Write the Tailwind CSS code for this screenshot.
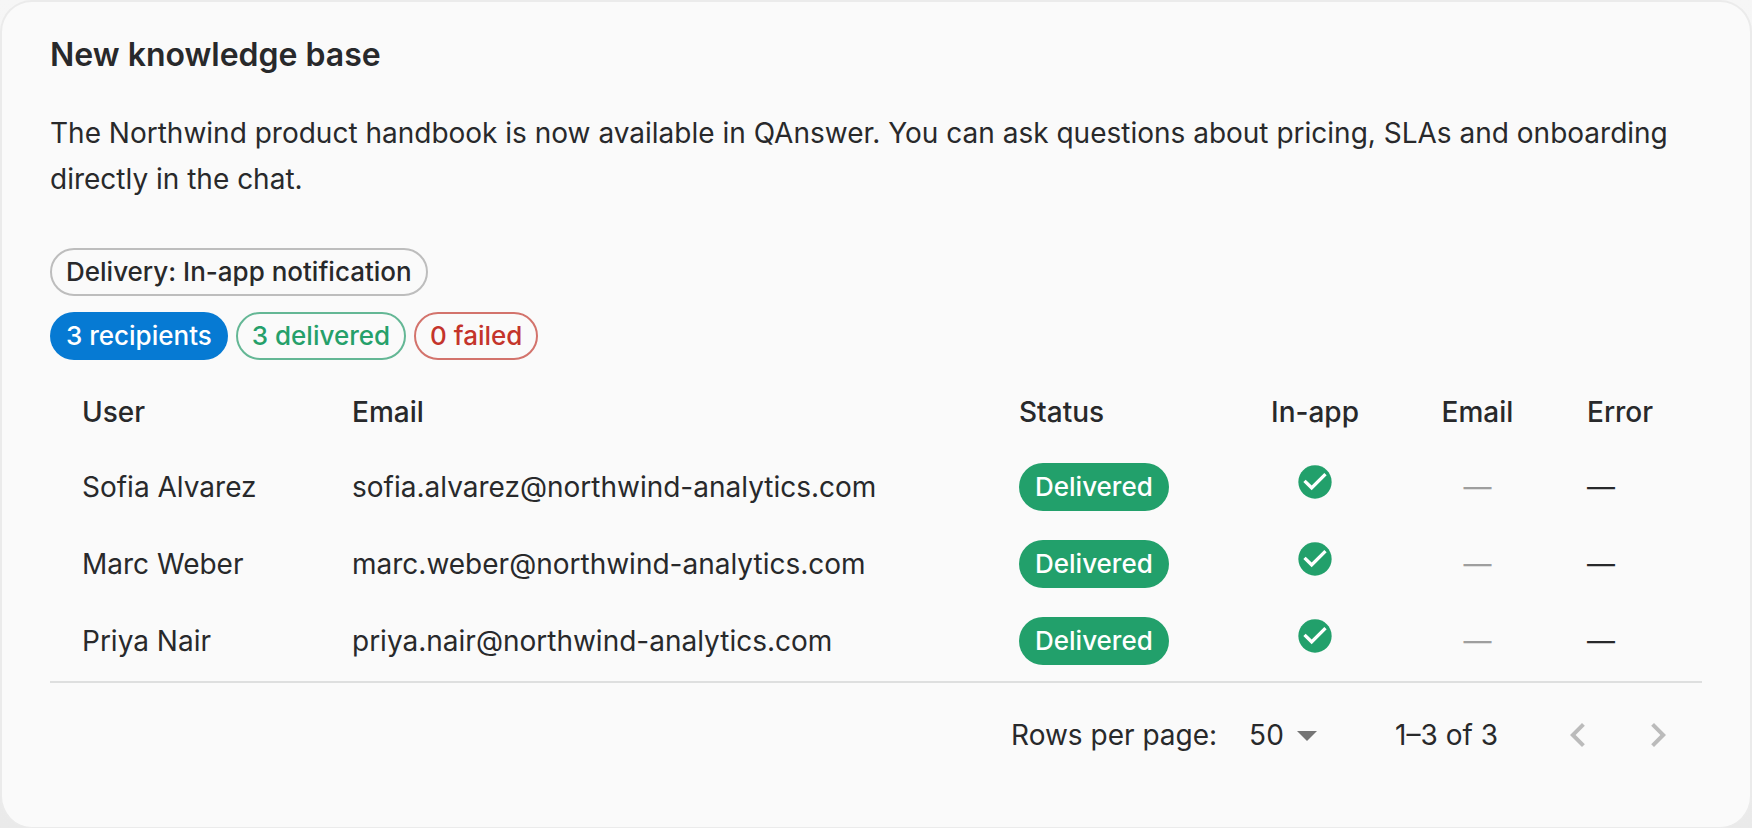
<!DOCTYPE html>
<html lang="en">
<head>
    <meta charset="UTF-8">
    <meta name="viewport" content="width=device-width, initial-scale=1.0">
    <title>New knowledge base</title>
    <script src="https://cdn.jsdelivr.net/npm/@tailwindcss/browser@4"></script>
</head>
<body class="min-h-screen flex bg-linear-to-b from-[#f6f6f6] to-[#eaeaea] font-['Inter',sans-serif] text-[28px] leading-10 text-[#28292b]">
    <main class="flex-1 bg-[#fafafa] border-2 border-b border-[#ebebeb] rounded-[32px] px-12 pt-8">
        <h1 class="text-[32px] leading-[42px] font-semibold">New knowledge base</h1>
        <p class="mt-[34px] leading-[46px]">The Northwind product handbook is now available in QAnswer. You can ask questions about pricing, SLAs and onboarding directly in the chat.</p>

        <div class="mt-[46px] flex text-[26px] font-medium">
            <span class="h-12 px-3.5 flex items-center border-2 border-[#bdbdbd] rounded-full">Delivery: In-app notification</span>
        </div>
        <div class="mt-4 flex gap-2 text-[26px] font-medium">
            <span class="h-12 px-4 flex items-center bg-[#067ad3] text-white rounded-full">3 recipients</span>
            <span class="h-12 px-3.5 flex items-center border-2 border-[#64b795] text-[#25a06a] rounded-full">3 delivered</span>
            <span class="h-12 px-3.5 flex items-center border-2 border-[#d3736c] text-[#c4342b] rounded-full">0 failed</span>
        </div>

        <table class="mt-4 w-full table-fixed pb-0.5 border-b-2 border-[#dedfdf] border-separate border-spacing-0">
            <colgroup>
                <col class="w-[270px]">
                <col>
                <col class="w-[243px]">
                <col class="w-[170px]">
                <col class="w-[155px]">
                <col class="w-[147px]">
            </colgroup>
            <thead>
                <tr class="h-[72px] text-left">
                    <th class="px-8 font-medium">User</th>
                    <th class="px-8 font-medium">Email</th>
                    <th class="px-8 font-medium">Status</th>
                    <th class="px-8 font-medium text-center">In-app</th>
                    <th class="px-8 font-medium text-center">Email</th>
                    <th class="px-8 font-medium">Error</th>
                </tr>
            </thead>
            <tbody>
                <tr class="h-[77px]">
                    <td class="px-8">Sofia Alvarez</td>
                    <td class="px-8">sofia.alvarez@northwind-analytics.com</td>
                    <td class="px-8"><span class="h-12 w-fit px-4 flex items-center bg-[#22a06b] text-white text-[26px] font-medium rounded-full">Delivered</span></td>
                    <td class="px-8 text-center">
                        <svg class="inline-block align-baseline size-10 fill-[#22a06b]" viewBox="0 0 24 24" role="img" aria-label="Yes"><path d="M12 2C6.48 2 2 6.48 2 12s4.48 10 10 10 10-4.48 10-10S17.52 2 12 2"/><path class="fill-white" d="m10 17-5-5 1.41-1.41L10 14.17l7.59-7.59L19 8z"/></svg>
                    </td>
                    <td class="px-8 text-center text-[#9e9e9e]">—</td>
                    <td class="px-8">—</td>
                </tr>
                <tr class="h-[77px]">
                    <td class="px-8">Marc Weber</td>
                    <td class="px-8">marc.weber@northwind-analytics.com</td>
                    <td class="px-8"><span class="h-12 w-fit px-4 flex items-center bg-[#22a06b] text-white text-[26px] font-medium rounded-full">Delivered</span></td>
                    <td class="px-8 text-center">
                        <svg class="inline-block align-baseline size-10 fill-[#22a06b]" viewBox="0 0 24 24" role="img" aria-label="Yes"><path d="M12 2C6.48 2 2 6.48 2 12s4.48 10 10 10 10-4.48 10-10S17.52 2 12 2"/><path class="fill-white" d="m10 17-5-5 1.41-1.41L10 14.17l7.59-7.59L19 8z"/></svg>
                    </td>
                    <td class="px-8 text-center text-[#9e9e9e]">—</td>
                    <td class="px-8">—</td>
                </tr>
                <tr class="h-[77px]">
                    <td class="px-8">Priya Nair</td>
                    <td class="px-8">priya.nair@northwind-analytics.com</td>
                    <td class="px-8"><span class="h-12 w-fit px-4 flex items-center bg-[#22a06b] text-white text-[26px] font-medium rounded-full">Delivered</span></td>
                    <td class="px-8 text-center">
                        <svg class="inline-block align-baseline size-10 fill-[#22a06b]" viewBox="0 0 24 24" role="img" aria-label="Yes"><path d="M12 2C6.48 2 2 6.48 2 12s4.48 10 10 10 10-4.48 10-10S17.52 2 12 2"/><path class="fill-white" d="m10 17-5-5 1.41-1.41L10 14.17l7.59-7.59L19 8z"/></svg>
                    </td>
                    <td class="px-8 text-center text-[#9e9e9e]">—</td>
                    <td class="px-8">—</td>
                </tr>
            </tbody>
        </table>

        <div class="h-26 pr-1 flex items-center justify-end">
            <label for="rows">Rows per page:</label>
            <div class="relative ml-4 mr-16">
                <select id="rows" class="appearance-none w-[98px] pl-4 bg-transparent">
                    <option>10</option>
                    <option>25</option>
                    <option selected>50</option>
                </select>
                <svg class="absolute right-0 top-0 -mt-1 size-12 fill-[#757575] pointer-events-none" viewBox="0 0 24 24"><path d="m7 10 5 5 5-5z"/></svg>
            </div>
            <span>1–3 of 3</span>
            <button disabled aria-label="Previous page" class="ml-10 p-4">
                <svg class="size-12 fill-[#bbbbbb]" viewBox="0 0 24 24"><path d="M15.41 16.59 10.83 12l4.58-4.59L14 6l-6 6 6 6z"/></svg>
            </button>
            <button disabled aria-label="Next page" class="p-4">
                <svg class="size-12 fill-[#bbbbbb]" viewBox="0 0 24 24"><path d="M8.59 16.59 13.17 12 8.59 7.41 10 6l6 6-6 6z"/></svg>
            </button>
        </div>
    </main>
</body>
</html>
